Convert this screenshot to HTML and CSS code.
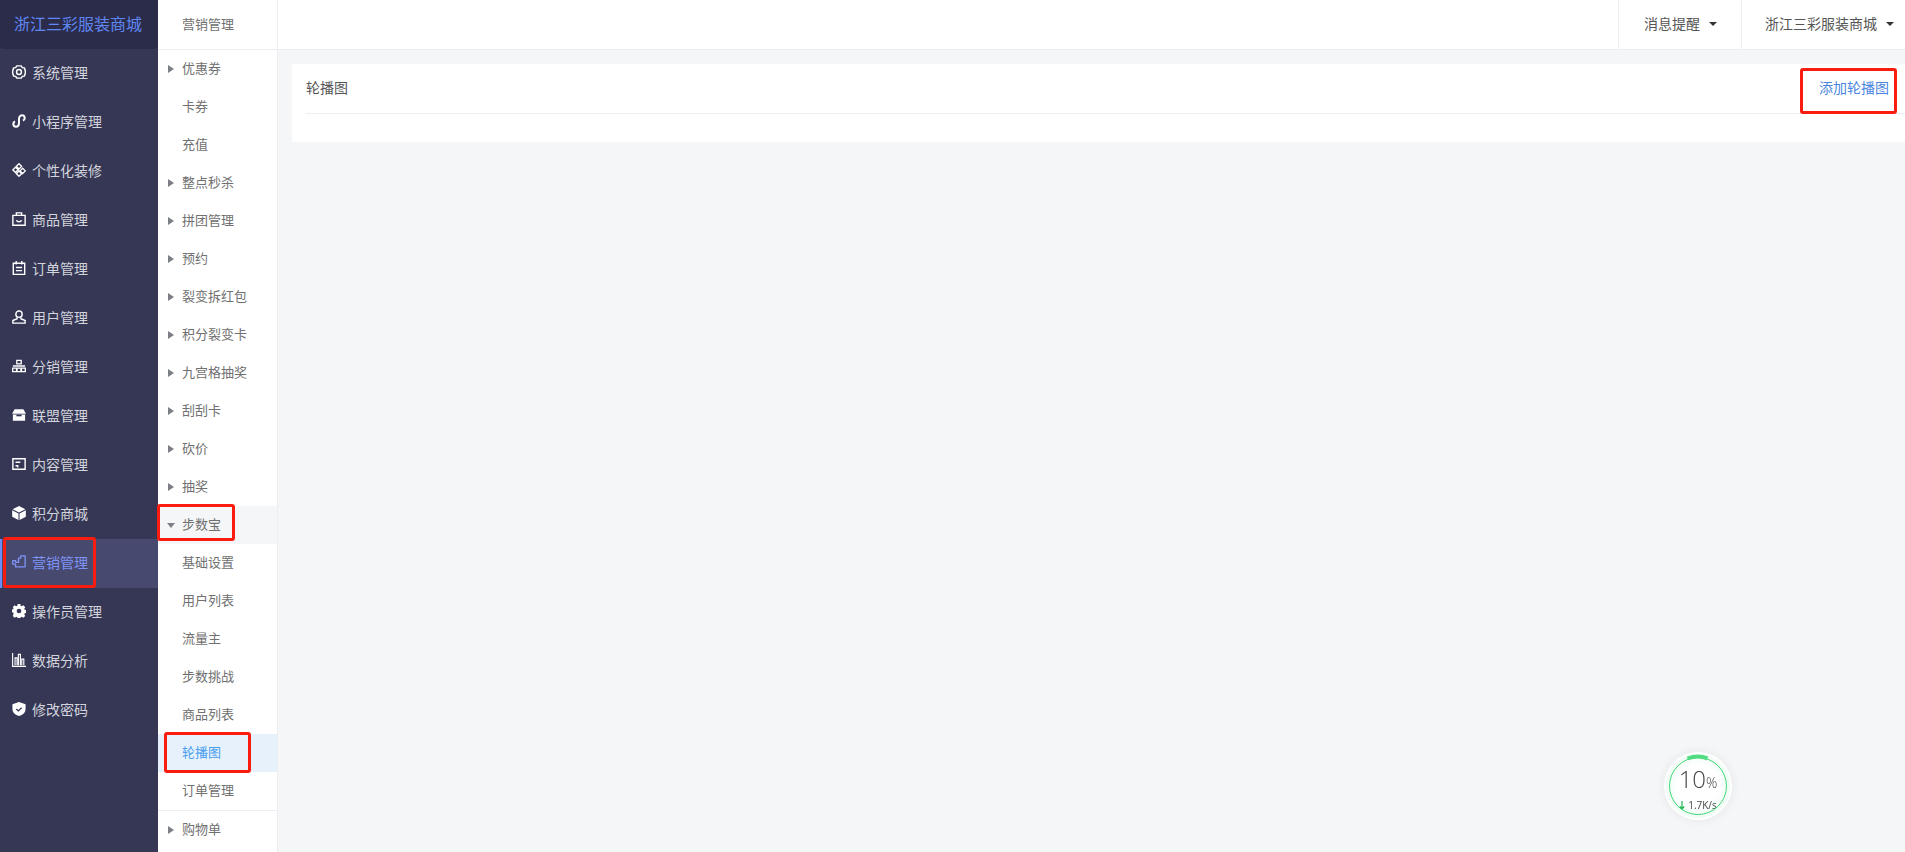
FILE: index.html
```html
<!DOCTYPE html>
<html lang="zh-CN">
<head>
    <meta charset="UTF-8">
    <title>轮播图 - 浙江三彩服装商城</title>
    <link rel="stylesheet" href="styles.css">
</head>
<body>
    <div class="app">
        <aside class="side">
            <div class="logo">浙江三彩服装商城</div>
            <a class="side-item">
                <svg class="ico" viewBox="0 0 16 16" fill="none" stroke="currentColor" stroke-width="1.700"><path d="M5.500 1h5l1.300 2 2.400.3L15.500 8l-1.300 4.700-2.400.3-1.300 2h-5l-1.300-2-2.400-.3L.5 8l1.300-4.700 2.400-.3z" stroke-linejoin="round"/><circle cx="8" cy="8" r="2.800"/></svg>
                系统管理
            </a>
            <a class="side-item">
                <svg class="ico" viewBox="0 0 16 16" fill="none" stroke="currentColor" stroke-width="2.300"><path d="M3.500 8.500C.5 9.500 1 14.500 4.500 14.500 7 14.500 8 12.500 8 10V6c0-2.500 1-4.500 3.500-4.500 3.500 0 4 5 1 6"/></svg>
                小程序管理
            </a>
            <a class="side-item">
                <svg class="ico" viewBox="0 0 16 16" fill="none" stroke="currentColor" stroke-width="1.500"><path d="M8 .8l3 3-3 3-3-3zM4 4.800l3 3-3 3-3-3zM12.200 6l3 3-3 3-3-3zM8 9.200l3 3-3 3-3-3z"/></svg>
                个性化装修
            </a>
            <a class="side-item">
                <svg class="ico" viewBox="0 0 16 16" fill="none" stroke="currentColor" stroke-width="1.600"><path d="M1 3.800h14v11.400H1zM5 3.800V1h6v2.800M5 9.500c1 2.200 5 2.200 6 0"/></svg>
                商品管理
            </a>
            <a class="side-item">
                <svg class="ico" viewBox="0 0 16 16" fill="none" stroke="currentColor" stroke-width="1.600"><path d="M1.500 2.500h13v13h-13zM4.800 0v4M11.200 0v4M4.500 7.500h7M4.500 11h7"/></svg>
                订单管理
            </a>
            <a class="side-item">
                <svg class="ico" viewBox="0 0 16 16" fill="none" stroke="currentColor" stroke-width="1.600"><circle cx="8" cy="4.800" r="3.600"/><path d="M5.800 8.500V10L1 12v3h14v-3l-4.800-2V8.500"/></svg>
                用户管理
            </a>
            <a class="side-item">
                <svg class="ico" viewBox="0 0 16 16" fill="none" stroke="currentColor" stroke-width="1.500"><path d="M5.500 1.500h5v4h-5zM.8 10.500h4.400v4H.8zM5.800 10.500h4.400v4H5.800zM10.800 10.500h4.400v4h-4.400zM1 8h14"/></svg>
                分销管理
            </a>
            <a class="side-item">
                <svg class="ico" viewBox="0 0 16 16"><path fill="currentColor" d="M3 1.500h10l3 5H0zM1 7.500h14v7H1z"/><path fill="#353755" d="M5 7.500h6v2H5z"/></svg>
                联盟管理
            </a>
            <a class="side-item">
                <svg class="ico" viewBox="0 0 16 16" fill="none" stroke="currentColor" stroke-width="1.600"><path d="M1 2h14v12H1zM4 6h5.500M4 10h2.500v2"/></svg>
                内容管理
            </a>
            <a class="side-item">
                <svg class="ico" viewBox="0 0 16 16"><path fill="currentColor" d="M8 0l7.300 3.700L8 7.500.7 3.700zM.2 4.800l7.200 3.800V16L.2 12.300zM15.800 4.800L8.600 8.600V16l7.200-3.700z"/></svg>
                积分商城
            </a>
            <a class="side-item active">
                <svg class="ico" viewBox="0 0 16 16" fill="none" stroke="currentColor" stroke-width="1.500"><path d="M.8 6.500h3.400v2h3.300V3.500H10V1h5v12.500H4V10.500H.8z" stroke-linejoin="round"/></svg>
                营销管理
            </a>
            <a class="side-item">
                <svg class="ico" viewBox="0 0 16 16"><path fill="currentColor" fill-rule="evenodd" d="M6.500 0h3l.4 2 1.300.6 1.800-1.100 2.100 2.100-1.100 1.800.6 1.300 2 .4v3l-2 .4-.6 1.300 1.100 1.800-2.100 2.100-1.800-1.100-1.300.6-.4 2h-3l-.4-2-1.300-.6-1.800 1.100-2.100-2.100L1.900 11l-.6-1.300-2-.4v-3l2-.4.6-1.300L.8 3.600 2.900 1.500l1.800 1.100L6 2zM8 5.300a2.700 2.700 0 1 0 0 5.400 2.700 2.700 0 0 0 0-5.400z"/></svg>
                操作员管理
            </a>
            <a class="side-item">
                <svg class="ico" viewBox="0 0 16 16" fill="none" stroke="currentColor" stroke-width="1.300"><path d="M.7 0v15.300H16M3.500 14V5.500h2.300V14M7.300 14V1.500h2.300V14M11.200 14V7h2.300v7"/></svg>
                数据分析
            </a>
            <a class="side-item">
                <svg class="ico" viewBox="0 0 16 16"><path fill="currentColor" d="M8 0l7.500 2.500V8c0 4-3.200 6.800-7.500 8-4.300-1.200-7.500-4-7.500-8V2.500z"/><path fill="none" stroke="#353755" stroke-width="1.500" d="M5 8l2.200 2.200L11 6.500"/></svg>
                修改密码
            </a>
        </aside>

        <nav class="sub">
            <div class="sub-title">营销管理</div>
            <a class="sub-item caret">优惠券</a>
            <a class="sub-item">卡券</a>
            <a class="sub-item">充值</a>
            <a class="sub-item caret">整点秒杀</a>
            <a class="sub-item caret">拼团管理</a>
            <a class="sub-item caret">预约</a>
            <a class="sub-item caret">裂变拆红包</a>
            <a class="sub-item caret">积分裂变卡</a>
            <a class="sub-item caret">九宫格抽奖</a>
            <a class="sub-item caret">刮刮卡</a>
            <a class="sub-item caret">砍价</a>
            <a class="sub-item caret">抽奖</a>
            <a class="sub-item caret open">步数宝</a>
            <a class="sub-item">基础设置</a>
            <a class="sub-item">用户列表</a>
            <a class="sub-item">流量主</a>
            <a class="sub-item">步数挑战</a>
            <a class="sub-item">商品列表</a>
            <a class="sub-item current">轮播图</a>
            <a class="sub-item">订单管理</a>
            <a class="sub-item caret group-end">购物单</a>
        </nav>

        <div class="main">
            <header class="topbar">
                <div class="top-menu top-msg">消息提醒<i class="down"></i></div>
                <div class="top-menu">浙江三彩服装商城<i class="down"></i></div>
            </header>
            <section class="content">
                <div class="card">
                    <div class="card-head">
                        <span class="card-title">轮播图</span>
                        <a class="add-link">添加轮播图</a>
                    </div>
                </div>
            </section>
        </div>
    </div>

    <!-- speed ball from the browser -->
    <div class="speed">
        <svg class="speed-ring" viewBox="0 0 64 64" fill="none">
            <circle cx="32" cy="32" r="28.500" stroke="#3fd777" stroke-width="1"/>
            <path d="M21.500 4.500A29.500 29.500 0 0 1 41.500 4.300" stroke="#4fdc83" stroke-width="4"/>
        </svg>
        <div class="speed-pct">10<small>%</small></div>
        <div class="speed-rate">
            <svg class="speed-arrow" viewBox="0 0 6 9" fill="none" stroke="#22b455" stroke-width="1.200"><path d="M3 0v8M.8 5.500L3 8l2.200-2.500"/></svg>
            1.7K/s
        </div>
    </div>

    <!-- red marks drawn on the screenshot -->
    <div class="mark mark-menu"></div>
    <div class="mark mark-group"></div>
    <div class="mark mark-item"></div>
    <div class="mark mark-add"></div>
</body>
</html>
```

FILE: styles.css
```css
html, body {
    margin: 0;
    height: 100%;
    overflow: hidden;
}
body {
    font-family: "Noto Sans CJK SC", "Liberation Sans", sans-serif;
    font-size: 14px;
    color: #707070;
    background-color: #f5f6f8;
}
.app {
    display: flex;
    height: 100vh;
}

/* dark sidebar */
.side {
    width: 158px;
    flex: none;
    background-color: #353755;
}
.logo {
    height: 49px;
    line-height: 47px;
    padding-right: 2px;
    box-sizing: border-box;
    text-align: center;
    font-size: 16px;
    color: #5f86f2;
    background-color: #2b2c4a;
    border-radius: 0 0 4px 4px;
}
.side-item {
    display: flex;
    align-items: center;
    height: 49px;
    padding: 0 0 3px 12px;
    color: #d3d4dc;
    box-sizing: border-box;
}
.ico {
    width: 14px;
    height: 14px;
    margin-right: 6px;
    color: #fff;
    flex: none;
}
.side-item.active {
    background-color: #47496f;
    border-left: 2px solid #6e8bfa;
    padding-left: 10px;
    color: #7f93f7;
}
.side-item.active .ico {
    color: #7f93f7;
}

/* second column */
.sub {
    width: 119px;
    flex: none;
    background-color: #fff;
    border-right: 1px solid #eceef1;
    overflow: hidden;
    font-size: 13px;
}
.sub-title {
    height: 49px;
    line-height: 47px;
    padding-left: 24px;
    border-bottom: 1px solid #eceef1;
}
.sub-item {
    display: block;
    position: relative;
    height: 38px;
    line-height: 36px;
    padding-left: 24px;
}
.sub-item.caret::before {
    content: "";
    position: absolute;
    left: 10px;
    top: 15px;
    border-style: solid;
    border-width: 4px 0 4px 6px;
    border-color: transparent transparent transparent #7d7f86;
}
.sub-item.open {
    background-color: #f5f6f8;
}
.sub-item.open::before {
    left: 9px;
    top: 17px;
    border-width: 5px 4px 0 4px;
    border-color: #7d7f86 transparent transparent transparent;
}
.sub-item.current {
    background-color: #e6f1fc;
    color: #4a9ff0;
}
.sub-item.group-end {
    border-top: 1px solid #eceef1;
}

/* right part */
.main {
    flex: 1;
    min-width: 0;
    display: flex;
    flex-direction: column;
}
.topbar {
    height: 49px;
    flex: none;
    display: flex;
    justify-content: flex-end;
    background-color: #fff;
    border-bottom: 1px solid #eceef1;
    color: #555;
}
.top-menu {
    display: flex;
    align-items: center;
    padding: 0 11px 3px 23px;
    border-left: 1px solid #eceef1;
}
.top-msg {
    padding: 0 24px 3px 25px;
}
.down {
    margin: 2px 0 0 9px;
    border-style: solid;
    border-width: 4px 4px 0 4px;
    border-color: #333 transparent transparent transparent;
}
.content {
    flex: 1;
    padding: 14px 0 0 14px;
}
.card {
    height: 78px;
    padding-left: 14px;
    background-color: #fff;
    box-sizing: border-box;
}
.card-head {
    display: flex;
    align-items: center;
    justify-content: space-between;
    height: 46px;
    padding: 0 16px 3px 0;
    border-bottom: 1px solid #eceef1;
}
.card-title {
    color: #555;
}
.add-link {
    color: #4a86e0;
}

/* speed ball */
.speed {
    position: fixed;
    left: 1666px;
    top: 754px;
    width: 64px;
    height: 64px;
    border-radius: 50%;
    background: radial-gradient(circle, #fff 45%, #e2f9ea 92%);
    box-shadow: 0 0 0 2px #fff, 0 0 7px 5px rgba(0, 0, 0, 0.04);
    text-align: center;
    font-family: "Open Sans", "Liberation Sans", sans-serif;
    color: #444;
}
.speed-ring {
    position: absolute;
    left: 0;
    top: 0;
    width: 64px;
    height: 64px;
}
.speed-pct {
    margin-top: 10px;
    font-size: 24px;
    font-weight: 300;
    line-height: 30px;
}
.speed-pct small {
    font-size: 14px;
}
.speed-rate {
    display: flex;
    align-items: center;
    justify-content: center;
    gap: 3px;
    font-size: 10px;
    line-height: 12px;
    margin-top: 1px;
}
.speed-arrow {
    width: 6px;
    height: 9px;
}

/* annotation boxes */
.mark {
    position: fixed;
    box-sizing: border-box;
    border: 3px solid #fb1c10;
    border-radius: 3px;
}
.mark-menu {
    left: 3px;
    top: 537px;
    width: 93px;
    height: 51px;
}
.mark-group {
    left: 157px;
    top: 504px;
    width: 78px;
    height: 37px;
}
.mark-item {
    left: 164px;
    top: 732px;
    width: 87px;
    height: 41px;
}
.mark-add {
    left: 1800px;
    top: 68px;
    width: 97px;
    height: 46px;
}
```
